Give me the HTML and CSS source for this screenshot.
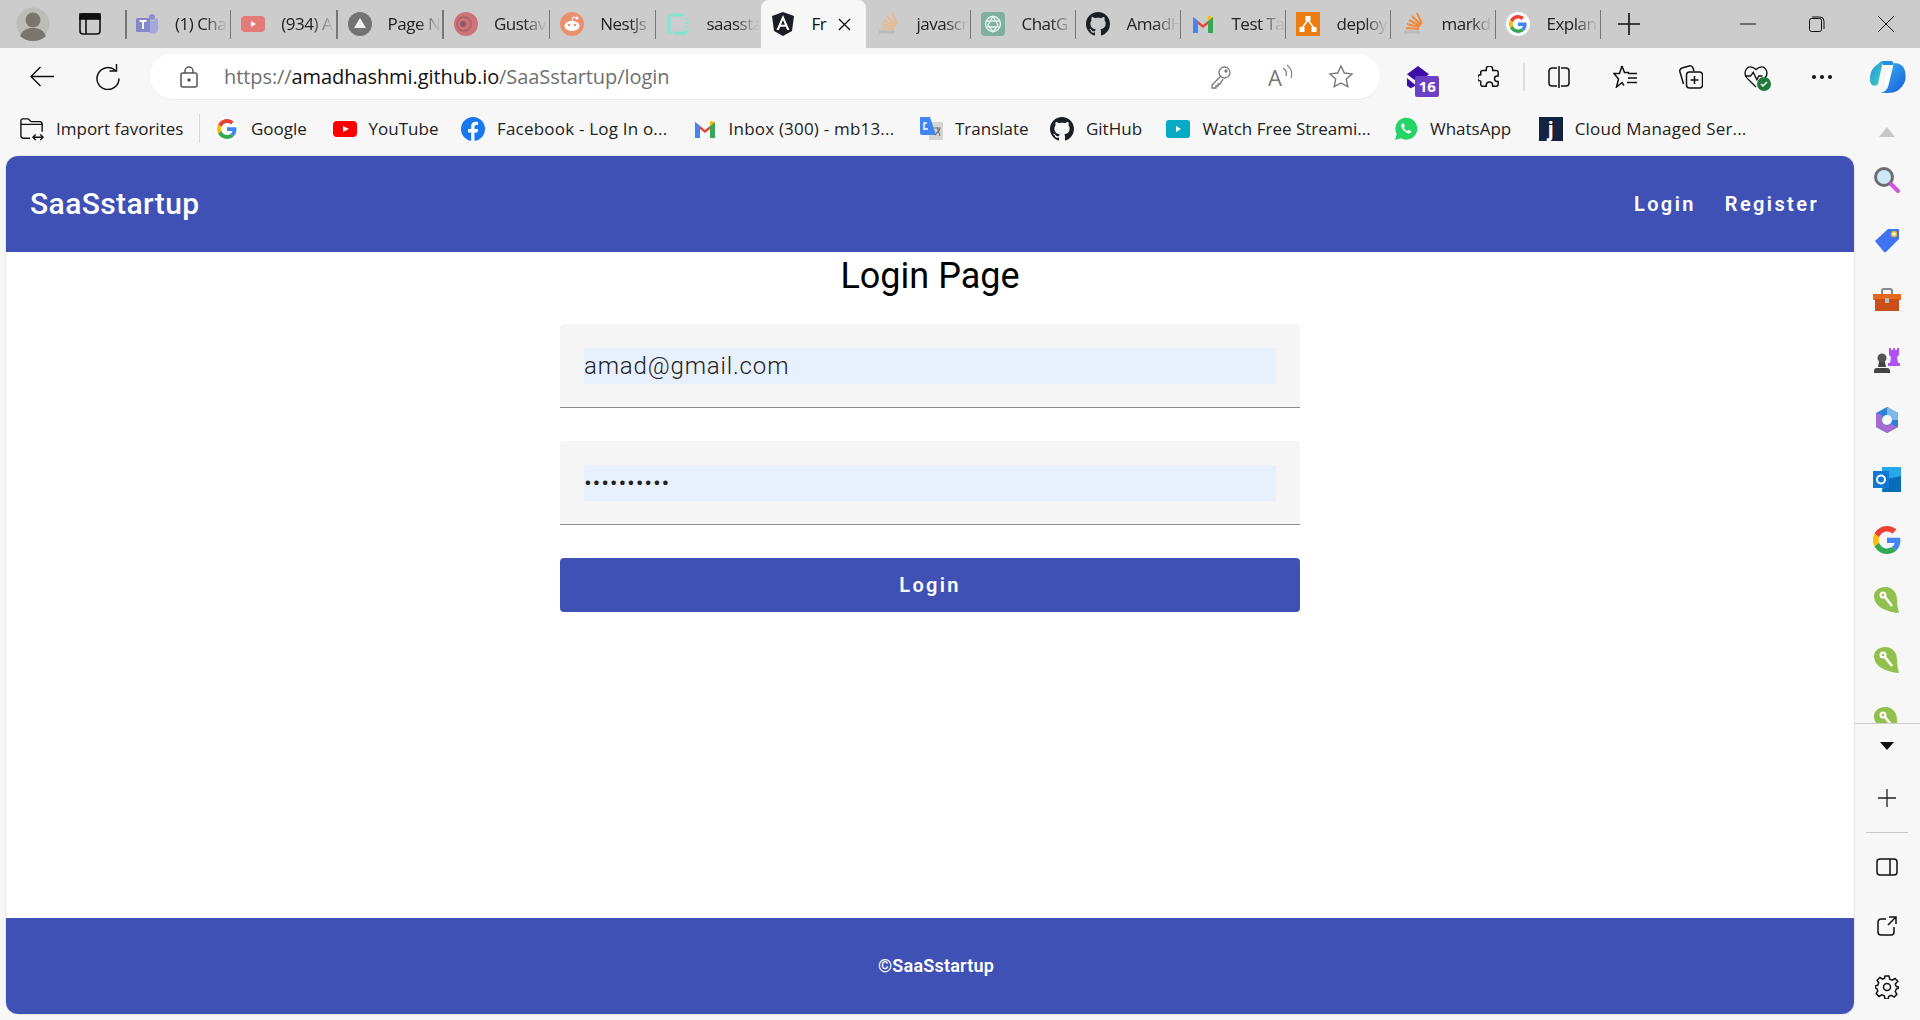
FILE: index.html
```html
<!DOCTYPE html>
<html lang="en">
<head>
<meta charset="utf-8">
<title>SaaSstartup Login</title>
<link rel="stylesheet" href="styles.css">
</head>
<body>
<div class="tabstrip">
  <div class="profile"><svg width="34" height="34" viewBox="0 0 34 34"><circle cx="17" cy="17" r="16.500" fill="#bdbdb8"/><circle cx="17" cy="13" r="7.500" fill="#79766f"/><path d="M4 29c3-7 8-8 13-8s10 1 13 8c-3 3-8 5-13 5s-10-2-13-5z" fill="#79766f"/></svg></div>
  <div class="tabs-btn"><svg width="22" height="22" viewBox="0 0 22 22" fill="none" stroke="#111" stroke-width="1.600"><rect x="1" y="1" width="20" height="20" rx="3"/><path d="M7 6v15"/><rect x="1" y="1" width="20" height="5" fill="#111"/></svg></div>
  <div class="tabs">
    <div class="tab"><svg class="ti" viewBox="0 0 24 24"><circle cx="17" cy="5" r="3" fill="#8c8ed0"/><circle cx="21" cy="8" r="2" fill="#a5a7dc"/><path d="M13 9h10v8a5 5 0 0 1-10 0z" fill="#a5a7dc"/><rect x="1" y="6" width="14" height="14" rx="1.500" fill="#8587c9"/><path d="M4.500 9h7M8 9v8" stroke="#fff" stroke-width="1.800"/></svg><span class="tt">(1) Cha</span></div>
    <div class="tab"><svg class="ti" viewBox="0 0 24 24"><rect y="4" width="24" height="16" rx="4" fill="#e57a7a"/><path d="M10 9l5 3-5 3z" fill="#fff"/></svg><span class="tt">(934) A</span></div>
    <div class="tab"><svg class="ti" viewBox="0 0 24 24"><circle cx="12" cy="12" r="12" fill="#737373"/><path d="M12 6l6 10H6z" fill="#f0f0f0"/></svg><span class="tt">Page N</span></div>
    <div class="tab"><svg class="ti" viewBox="0 0 24 24"><circle cx="12" cy="12" r="12" fill="#cf7377"/><circle cx="10" cy="12" r="7" fill="none" stroke="#a85f6e" stroke-width="1.500"/><circle cx="9" cy="12" r="3" fill="#8a5a6c"/></svg><span class="tt">Gustav</span></div>
    <div class="tab"><svg class="ti" viewBox="0 0 24 24"><circle cx="12" cy="12" r="12" fill="#e9906f"/><ellipse cx="12" cy="14" rx="7.500" ry="5" fill="#fff"/><circle cx="9" cy="13" r="1.300" fill="#e9906f"/><circle cx="15" cy="13" r="1.300" fill="#e9906f"/><circle cx="17" cy="6" r="1.500" fill="#fff"/><path d="M12 9l1-4 4 1" stroke="#fff" fill="none"/></svg><span class="tt">NestJs</span></div>
    <div class="tab noend"><svg class="ti" viewBox="0 0 24 24" fill="none"><path d="M5 3h13M21 21H8M3 3v18" stroke="#7fe8cf" stroke-width="3"/><path d="M21 6v15M3 21h5" stroke="#7fe8cf" stroke-width="3" stroke-dasharray="2 2"/></svg><span class="tt">saassta</span></div>
    <div class="tab active noend"><svg class="ti" viewBox="0 0 24 24"><path d="M12 0l11 4-2 15-9 5-9-5L1 4z" fill="#1c1c24"/><path d="M12 3L5.500 18h2.400l1.300-3.300h5.600l1.300 3.300h2.400zM10.100 12.700L12 8l1.900 4.700z" fill="#fff"/></svg><span class="tt">Fr</span><svg class="tx" viewBox="0 0 14 14" stroke="#111" stroke-width="1.400"><path d="M1 1l12 12M13 1L1 13"/></svg></div>
    <div class="tab"><svg class="ti" viewBox="0 0 24 24" fill="none" stroke="#e9b98f" stroke-width="2"><path d="M3 20h16" stroke="#bbb" stroke-width="3"/><path d="M5 16l13 1M6 12l12 3M8 8l11 6M11 4l9 9M16 1l5 11"/></svg><span class="tt">javascr</span></div>
    <div class="tab"><svg class="ti" viewBox="0 0 24 24"><rect width="24" height="24" rx="4" fill="#7faf9e"/><g fill="none" stroke="#e8f3ef" stroke-width="1.300"><circle cx="12" cy="12" r="7.500"/><path d="M12 4.500l5 8.500-5 7-5-7zM5 9h14M5 15h14"/></g></svg><span class="tt">ChatG</span></div>
    <div class="tab"><svg class="ti" viewBox="0 0 16 16"><use href="#gh-mark"/></svg><span class="tt">AmadH</span></div>
    <div class="tab"><svg class="ti" viewBox="0 0 24 24"><use href="#gm-mark"/></svg><span class="tt">Test Ta</span></div>
    <div class="tab"><svg class="ti" viewBox="0 0 24 24"><rect width="24" height="24" fill="#ee7d11"/><g fill="#fff"><rect x="9.500" y="4" width="5" height="5"/><rect x="3.500" y="15" width="5" height="5"/><rect x="15.500" y="15" width="5" height="5"/></g><path d="M12 8l-6 8M12 8l6 8" stroke="#fff" stroke-width="1.500"/></svg><span class="tt">deploy</span></div>
    <div class="tab"><svg class="ti" viewBox="0 0 24 24" fill="none" stroke="#f08a3c" stroke-width="2"><path d="M3 20h16" stroke="#bbb" stroke-width="3"/><path d="M5 16l13 1M6 12l12 3M8 8l11 6M11 4l9 9M16 1l5 11"/></svg><span class="tt">markd</span></div>
    <div class="tab"><svg class="ti" viewBox="-8 -8 64 64"><circle cx="24" cy="24" r="32" fill="#fff"/><use href="#g-mark"/></svg><span class="tt">Explan</span></div>
  </div>
  <div class="newtab"><svg width="22" height="22" viewBox="0 0 22 22" stroke="#111" stroke-width="1.600"><path d="M11 0v22M0 11h22"/></svg></div>
  <div class="winctl">
    <svg width="16" height="16" viewBox="0 0 16 16" stroke="#111"><path d="M0 8h16"/></svg>
    <svg width="16" height="16" viewBox="0 0 16 16" fill="none" stroke="#111"><rect x=".5" y="2.500" width="12" height="13" rx="2"/><path d="M3 1h8a4 4 0 0 1 4 4v8"/></svg>
    <svg width="16" height="16" viewBox="0 0 16 16" stroke="#111"><path d="M0 0l16 16M16 0L0 16"/></svg>
  </div>
</div>

<div class="toolbar">
  <svg class="nav-back" width="24" height="21" viewBox="0 0 24 21" fill="none" stroke="#111" stroke-width="1.500"><path d="M24 10.500H1M10.500 1L1 10.500 10.500 20"/></svg>
  <svg class="nav-reload" width="24" height="26" viewBox="0 0 24 26" fill="none" stroke="#111" stroke-width="1.500"><path d="M19.500 6.500A11 11 0 1 0 23 14.500"/><path d="M20.500 0v7h-7"/></svg>
  <div class="omnibox">
    <svg class="lock" width="18" height="22" viewBox="0 0 18 22" fill="none" stroke="#555" stroke-width="1.500"><rect x="1" y="7" width="16" height="14" rx="2"/><path d="M5 7V5a4 4 0 0 1 8 0v2"/><circle cx="9" cy="14" r="1" fill="#555"/></svg>
    <div class="url">https://<span class="host">amadhashmi.github.io</span>/SaaSstartup/login</div>
    <svg class="o-ico" width="22" height="24" viewBox="0 0 22 24" fill="none" stroke="#777" stroke-width="1.300"><circle cx="14.500" cy="7.500" r="5.500"/><circle cx="16" cy="6" r="1"/><path d="M10.500 11.500L2 20v3h4v-2h2v-2h2l3-5"/></svg>
    <div class="read">A<svg width="12" height="16" viewBox="0 0 12 16" fill="none" stroke="#777" stroke-width="1.200"><path d="M1 4c3 2 4 5 3 8M5 1c4 3 6 8 4 13"/></svg></div>
    <svg class="o-ico" width="26" height="26" viewBox="0 0 26 26" fill="none" stroke="#777" stroke-width="1.400"><path d="M13 2l3.300 7 7.700.9-5.700 5.200 1.500 7.600L13 19l-6.800 3.700 1.500-7.600L2 9.900 9.700 9z"/></svg>
  </div>
  <div class="tb-icons">
    <div class="slot"><div class="badge-wrap"><svg width="24" height="26" viewBox="0 0 26 28"><path d="M13 1l12 9-12 9L1 10z" fill="#3c0fa8"/><path d="M1 14l10 8-6 3-4-3z" fill="#3c0fa8"/></svg><span class="badge">16</span></div></div>
    <div class="slot"><svg width="22" height="22" viewBox="0 0 24 24" fill="none" stroke="#111" stroke-width="1.600"><path d="M9 3.500a3.500 3.500 0 0 1 7 0V5h4a2 2 0 0 1 2 2v4h-1a3 3 0 0 0 0 6h1v3a2 2 0 0 1-2 2h-4v-1a3.500 3.500 0 0 0-7 0v1H5a2 2 0 0 1-2-2v-3.500h0a3.500 3.500 0 0 1 0-7h0V7a2 2 0 0 1 2-2h4z"/></svg></div>
    <i class="vsep"></i>
    <div class="slot"><svg width="22" height="22" viewBox="0 0 22 22" fill="none" stroke="#111" stroke-width="1.500"><path d="M9 2H4a3 3 0 0 0-3 3v12a3 3 0 0 0 3 3h5M13 2h5a3 3 0 0 1 3 3v12a3 3 0 0 1-3 3h-5M11 0v22"/></svg></div>
    <div class="slot"><svg width="24" height="23" viewBox="0 0 24 23" fill="none" stroke="#111" stroke-width="1.500"><path d="M9 1l2.500 6.500H16M11 20.500L9 17.500 3.500 22 5.500 14 1 8.500h5.500L9 1"/><path d="M15 8.500h9M15 13h9M14 17.500h10"/></svg></div>
    <div class="slot"><svg width="24" height="24" viewBox="0 0 24 24" fill="none" stroke="#111" stroke-width="1.500"><rect x="7.500" y="7" width="16" height="16" rx="3"/><path d="M15.500 11v8M11.500 15h8M4.500 19L1 7a3 3 0 0 1 2-4l7-2a3 3 0 0 1 4 2l1 3"/></svg></div>
    <div class="slot"><div class="health"><svg width="24" height="23" viewBox="0 0 26 25" fill="none" stroke="#111" stroke-width="1.500"><path d="M13 24L3 14C-1 9 2 2 7 2c3 0 5 2 6 3 1-1 3-3 6-3 5 0 8 7 4 12"/><path d="M1 12h6l3-4 4 8 2-4h4"/></svg><i class="ok"><svg width="10" height="10" viewBox="0 0 10 10" fill="none" stroke="#fff" stroke-width="1.500"><path d="M2 5l2 2 4-4"/></svg></i></div></div>
    <div class="slot"><div class="dots"><i></i><i></i><i></i></div></div>
    <div class="slot"><svg width="36" height="32" viewBox="0 0 36 32"><defs><linearGradient id="cp1" x1="0" y1="0" x2="1" y2="1"><stop offset="0" stop-color="#1f8fe8"/><stop offset="1" stop-color="#47d6b2"/></linearGradient><linearGradient id="cp2" x1="0" y1="0" x2="1" y2="1"><stop offset="0" stop-color="#3ac4f2"/><stop offset="1" stop-color="#1a56db"/></linearGradient></defs><path d="M12 0h9c2 0 3 2 2 4L13 4C12 2 12 1 12 0z" fill="#1f8fe8"/><path d="M8 3c2-2 3-3 5-3l-5 23c-1 2-4 2-6 1-2-2-2-4-2-6 0-7 3-12 8-15z" fill="url(#cp1)"/><path d="M24 2c6 0 10 3 11 8 1 6 1 10-2 14-3 5-8 8-15 8H8c5 0 8-2 10-6L23 6c0-2 0-3 1-4z" fill="url(#cp2)"/><path d="M19.500 8L16 24" stroke="#fff" stroke-width="3.500"/></svg></div>
  </div>
</div>

<div class="bookmarks">
  <div class="bm import"><svg width="24" height="24" viewBox="0 0 26 26" fill="none" stroke="#111" stroke-width="1.500"><path d="M11 23H4a3 3 0 0 1-3-3V4a2 2 0 0 1 2-2h6l3 3h9a3 3 0 0 1 3 3v8"/><path d="M1 8h24M14 22h11M17 19l-3 3 3 3M22 19l3 3-3 3"/></svg><span>Import favorites</span></div>
  <div class="bm"><svg class="bi" viewBox="-5 -5 58 58"><circle cx="24" cy="24" r="29" fill="#fff"/><g id="g-mark"><path fill="#ea4335" d="M24 9.500c3.500 0 6.700 1.200 9.200 3.600l6.900-6.900C35.900 2.400 30.500 0 24 0 14.600 0 6.500 5.400 2.600 13.200l8 6.200C12.500 13.700 17.800 9.500 24 9.500z"/><path fill="#4285f4" d="M47 24.500c0-1.600-.1-3.100-.4-4.500H24v9h13c-.6 3-2.300 5.500-4.800 7.200l7.700 6C44.400 37.900 47 31.800 47 24.500z"/><path fill="#fbbc05" d="M10.500 28.600A14.500 14.500 0 0 1 10.500 19.400l-8-6.200A24 24 0 0 0 2.600 34.800z"/><path fill="#34a853" d="M24 48c6.500 0 11.900-2.100 15.900-5.800l-7.700-6c-2.100 1.400-4.900 2.300-8.200 2.300-6.200 0-11.500-4.200-13.400-9.900l-8 6.200C6.500 42.600 14.600 48 24 48z"/></g></svg><span>Google</span></div>
  <div class="bm"><svg class="bi" viewBox="0 0 24 24"><rect y="4" width="24" height="16" rx="4" fill="#f00"/><path d="M10 9l6 3-6 3z" fill="#fff"/></svg><span>YouTube</span></div>
  <div class="bm"><svg class="bi" viewBox="0 0 24 24"><circle cx="12" cy="12" r="12" fill="#1877f2"/><path d="M16.500 15.500l.5-3.500h-3.500V9.800c0-1 .5-1.900 2-1.900H17V5c-3.600-.7-6.800.2-6.800 4.400V12H7v3.500h3.200V24h3.300v-8.500z" fill="#fff"/></svg><span class="wide">Facebook - Log In o...</span></div>
  <div class="bm"><svg class="bi" viewBox="0 0 24 24"><g id="gm-mark"><path d="M2 21V5l10 8 10-8v16h-5v-9l-5 4-5-4v9z" fill="#ea4335"/><path d="M2 21V5l5 4v12z" fill="#4285f4"/><path d="M22 21V5l-5 4v12z" fill="#34a853"/><path d="M22 5l-5 4V4z" fill="#fbbc04"/></g></svg><span class="wide">Inbox (300) - mb13...</span></div>
  <div class="bm"><svg class="bi" viewBox="0 0 24 24"><rect x="10" y="5" width="14" height="18" fill="#d5d5d5"/><path d="M1 0h10l6 18H3a2 2 0 0 1-2-2z" fill="#4285f4"/><path d="M8 6H5v6h4" fill="none" stroke="#fff" stroke-width="1.500"/><path d="M15 11h7M18 10l3 9M21 12l-5 6" stroke="#777" stroke-width="1.200"/></svg><span>Translate</span></div>
  <div class="bm"><svg class="bi" viewBox="0 0 16 16"><path id="gh-mark" fill="#1b1f24" d="M8 0C3.580 0 0 3.580 0 8c0 3.540 2.290 6.530 5.470 7.590.4.070.55-.17.55-.38 0-.19-.01-.82-.01-1.490-2.010.37-2.530-.49-2.690-.94-.09-.23-.48-.94-.82-1.130-.28-.15-.68-.52-.01-.53.630-.01 1.080.58 1.230.82.720 1.210 1.870.87 2.330.66.070-.52.280-.87.510-1.070-1.780-.2-3.640-.89-3.640-3.950 0-.87.310-1.590.820-2.150-.08-.2-.36-1.020.08-2.120 0 0 .67-.21 2.200.82.640-.18 1.320-.27 2-.27s1.360.09 2 .27c1.530-1.040 2.200-.82 2.200-.82.440 1.100.160 1.920.08 2.120.510.560.820 1.270.820 2.150 0 3.070-1.870 3.750-3.650 3.950.29.250.54.730.54 1.480 0 1.070-.01 1.930-.01 2.200 0 .21.150.46.550.38A8.010 8.010 0 0 0 16 8c0-4.420-3.580-8-8-8z"/></svg><span>GitHub</span></div>
  <div class="bm"><svg class="bi" viewBox="0 0 24 24"><rect y="3" width="24" height="18" rx="3" fill="#05abc4"/><path d="M10 9l5 3-5 3z" fill="#fff"/></svg><span>Watch Free Streami...</span></div>
  <div class="bm"><svg class="bi" viewBox="0 0 24 24"><path d="M1 23l1.700-6A11 11 0 1 1 7 21.300z" fill="#25d366"/><path d="M8 6.500c-1.500 1.500-1 4 1.500 6.800 3 3 5.500 4 7 2.500l1-1.500-3-1.500-1.200 1.200c-1.500-.5-3-2-3.600-3.600L11 9.200 9.500 6.300z" fill="#fff"/></svg><span>WhatsApp</span></div>
  <div class="bm"><span class="jtile">j</span><span class="wide">Cloud Managed Ser...</span></div>
  <svg class="bm-up" width="16" height="10" viewBox="0 0 16 10"><path d="M8 0l8 10H0z" fill="#c8c8c8"/></svg>
</div>

<div class="lower">
  <div class="app">
    <header class="app-header">
      <div class="brand">SaaSstartup</div>
      <nav class="app-nav"><a>Login</a><a>Register</a></nav>
    </header>
    <main class="login">
      <h1>Login Page</h1>
      <form class="login-form">
        <div class="field"><input class="field-input" type="email" value="amad@gmail.com"></div>
        <div class="field"><input class="field-input" type="password" value="1234567890"></div>
        <button class="submit" type="button">Login</button>
      </form>
    </main>
    <footer class="app-footer">©SaaSstartup</footer>
  </div>
  <aside class="sidebar">
    <div class="side-scroll">
      <svg class="si" viewBox="0 0 28 28"><circle cx="11" cy="11" r="8.500" fill="#cfe8f7" stroke="#6d6d6d" stroke-width="3"/><path d="M18 18l7 7" stroke="#d050e0" stroke-width="4" stroke-linecap="round"/></svg>
      <svg class="si" viewBox="0 0 28 28"><path d="M2 15L15 3h10a1 1 0 0 1 1 1v9L13 26a2 2 0 0 1-2 0z" fill="#3f73f0"/><circle cx="21" cy="8" r="2.500" fill="#fff" stroke="#e6b422" stroke-width="1.500"/></svg>
      <svg class="si" viewBox="0 0 28 28"><path d="M9 8V5a2 2 0 0 1 2-2h6a2 2 0 0 1 2 2v3" fill="none" stroke="#888" stroke-width="2"/><rect y="8" width="28" height="6" fill="#e8671f"/><rect x="2" y="13" width="24" height="12" fill="#c94f1a"/><rect x="12" y="12" width="4" height="5" fill="#bbb"/></svg>
      <svg class="si" viewBox="0 0 28 28"><path d="M16 2h2v2h2V2h2v2h2V2h2v7l-2 2 1 6h2v3H15v-3h2l1-6-2-2z" fill="#b050f0"/><circle cx="9" cy="12" r="4.500" fill="#555"/><path d="M6 16h6l1 5H5zM1 25a3 3 0 0 1 3-3h10a3 3 0 0 1 3 3v2H1z" fill="#444"/></svg>
      <svg class="si" viewBox="0 0 28 28"><path d="M14 1l11 6v14l-11 6-11-6V7z" fill="#2e7fd6"/><path d="M14 1l11 6v7h-7a5 5 0 0 0-4-4z" fill="#7db9e8"/><path d="M3 7v14l11 6 11-6-7-3-4 2-5-4V9z" fill="#a56bcf"/><circle cx="14" cy="14" r="5" fill="#f7f7f7"/></svg>
      <svg class="si" viewBox="0 0 28 28"><rect x="9" y="1" width="19" height="25" fill="#28a8ea"/><path d="M14 13l14-3v16H9z" fill="#0a6cb8"/><rect y="5" width="16" height="17" fill="#0f78d4"/><circle cx="8" cy="13.500" r="4" fill="none" stroke="#fff" stroke-width="2"/></svg>
      <svg class="si" viewBox="0 0 48 48"><use href="#g-mark"/></svg>
      <svg class="si" viewBox="0 0 28 28"><use href="#keypin"/></svg>
      <svg class="si" viewBox="0 0 28 28"><use href="#keypin"/></svg>
      <svg class="si" viewBox="0 0 28 28"><g id="keypin"><path d="M12 1c8 0 12 6 12 13 0 5 1 9 2 13C14 26 1 21 1 10 1 5 6 1 12 1z" fill="#92c04c"/><circle cx="10" cy="9" r="3.500" fill="#fff"/><circle cx="10" cy="9" r="1.300" fill="#92c04c"/><path d="M12 11l7 9" stroke="#fff" stroke-width="2.600"/></g></svg>
    </div>
    <div class="side-bottom">
      <svg class="sb" width="14" height="8" viewBox="0 0 14 8"><path d="M0 0h14L7 8z" fill="#111"/></svg>
      <svg class="sb" width="18" height="18" viewBox="0 0 18 18" stroke="#222" stroke-width="1.300"><path d="M9 0v18M0 9h18"/></svg>
      <i class="side-rule"></i>
      <svg class="sb" width="22" height="18" viewBox="0 0 22 18" fill="none" stroke="#111" stroke-width="1.500"><rect x="1" y="1" width="20" height="16" rx="3"/><path d="M14 1v16"/></svg>
      <svg class="sb" width="20" height="20" viewBox="0 0 20 20" fill="none" stroke="#111" stroke-width="1.500"><path d="M9 3H4a3 3 0 0 0-3 3v10a3 3 0 0 0 3 3h10a3 3 0 0 0 3-3v-5M11 9l8-8M12 1h7v7"/></svg>
      <svg class="sb" width="24" height="24" viewBox="0 0 24 24" fill="none" stroke="#111" stroke-width="1.500"><circle cx="12" cy="12" r="3.500"/><path d="M10 1h4l.7 3.200 2.500 1 2.800-1.700 2.800 2.800L20.300 9l1 2.500L24 12v1l-2.700 1-1 2.500 1.600 2.800-2.800 2.800-2.800-1.700-2.500 1L13 24h-3l-.7-3.200-2.500-1-2.800 1.700-2.800-2.800L2.800 16l-1-2.500L0 13v-2l2.700-.7 1-2.500L2.100 5.300l2.800-2.800 2.800 1.700 1.800-1z"/></svg>
    </div>
  </aside>
</div>
</body>
</html>
```
FILE: styles.css
```css
* { box-sizing: border-box; }
html, body { margin: 0; padding: 0; height: 100%; }
body {
  width: 1920px; height: 1020px; overflow: hidden;
  background: #f7f7f7; color: #111;
  font-family: "Open Sans", "Noto Sans", sans-serif;
  display: flex; flex-direction: column;
}
svg { display: block; flex: none; }

/* tab strip */
.tabstrip { height: 48px; background: #ccc; display: flex; align-items: center; flex: none; }
.profile { width: 34px; margin-left: 16px; }
.tabs-btn { margin-left: 29px; margin-right: 24px; width: 22px; }
.tabs { display: grid; grid-template-columns: repeat(5, 106.300px) repeat(9, 105px); }
.tab {
  height: 48px; display: flex; align-items: center; padding: 0 2px 0 10px;
  position: relative; font-size: 17px; letter-spacing: -.5px; color: #222;
}
.tab:first-child::before { content: ""; position: absolute; left: 0; top: 10px; height: 29px; width: 1.500px; background: #777; }
.tab::after { content: ""; position: absolute; right: 0; top: 10px; height: 29px; width: 1.500px; background: #777; }
.tab.noend::after { display: none; }
.tab.active { background: #f7f7f7; border-radius: 8px 8px 0 0; }
.ti { width: 24px; height: 24px; margin-right: 16px; }
.tt { white-space: nowrap; flex: 1; min-width: 0; margin-top: -2px; -webkit-mask-image: linear-gradient(90deg, #000 55%, rgba(0,0,0,.1) 92%); mask-image: linear-gradient(90deg, #000 55%, rgba(0,0,0,.1) 92%); }
.active .tt { color: #111; -webkit-mask-image: none; mask-image: none; }
.tx { width: 13px; height: 13px; margin-right: 13px; }
.newtab { margin-left: 17px; }
.winctl { margin-left: auto; display: flex; gap: 53px; margin-right: 26px; }

/* toolbar */
.toolbar { height: 60px; display: flex; align-items: center; flex: none; padding-bottom: 3px; }
.nav-back { margin-left: 30px; }
.nav-reload { margin-left: 42px; }
.omnibox {
  margin-left: 30px; width: 1230px; height: 45px; background: #fff; border-radius: 23px; flex: none;
  display: flex; align-items: center; padding: 0 26px 0 30px; box-shadow: 0 1px 1px rgba(0,0,0,.05);
}
.lock { margin-right: 26px; }
.url { font-size: 20px; letter-spacing: -.08px; color: #6f6f6f; flex: 1; white-space: nowrap; }
.host { color: #111; }
.read { display: flex; align-items: flex-start; margin: 0 34px 0 36px; color: #777; font-size: 22px; line-height: 26px; }
.tb-icons { display: flex; align-items: center; flex: 1; margin-left: 10px; }
.slot { width: 65.700px; display: flex; justify-content: center; align-items: center; flex: none; }
.badge-wrap { position: relative; width: 33px; height: 32px; margin-top: 9px; }
.badge {
  position: absolute; right: 0; bottom: 0; width: 24px; height: 21px; background: #6d3fc4; color: #fff;
  border-radius: 2px; font: 700 15px/21px "Noto Sans", sans-serif; text-align: center;
}
.vsep { width: 2px; height: 28px; background: #ddd; margin: 0 1.500px; flex: none; }
.health { position: relative; width: 24px; height: 24px; }
.ok { position: absolute; right: -3px; bottom: -2px; width: 14px; height: 14px; border-radius: 50%; background: #1f7a3c; display: flex; align-items: center; justify-content: center; }
.dots { display: flex; gap: 4px; }
.dots i { width: 4px; height: 4px; background: #111; border-radius: 50%; }

/* bookmarks */
.bookmarks {
  height: 48px; flex: none; padding: 0 0 7px 20px; font-size: 17px; color: #222; position: relative;
  display: grid; align-items: center;
  grid-template-columns: 195px 117.600px 128.400px 231.600px 226.400px 131px 116.500px 227.500px 144.700px 1fr;
}
.bm { display: flex; align-items: center; gap: 12px; white-space: nowrap; }
.bm.import { width: 180px; height: 29px; border-right: 1px solid #d8d8d8; }
.wide { letter-spacing: .2px; }
.bi { width: 24px; height: 24px; }
.jtile { width: 24px; height: 24px; background: #14233f; color: #fff; font: 700 20px/24px "Noto Sans", sans-serif; text-align: center; }
.bm-up { position: absolute; right: 25px; top: 19px; }

/* app */
.lower { flex: 1; display: flex; min-height: 0; }
.app { width: 1848px; margin: 0 0 6px 6px; background: #fff; border-radius: 12px; overflow: hidden; display: flex; flex-direction: column; box-shadow: 0 0 2px rgba(0,0,0,.2); font-family: Roboto, sans-serif; }
.app-header { height: 96px; flex: none; background: #3f51b5; color: #fff; display: flex; align-items: center; justify-content: space-between; padding: 0 35px 0 24px; }
.brand { font-size: 30px; font-weight: 500; letter-spacing: .4px; margin-bottom: 2px; }
.app-nav { display: flex; gap: 29px; font-size: 20px; font-weight: 600; letter-spacing: 2.400px; }
.login { flex: 1; display: flex; flex-direction: column; align-items: center; }
.login h1 { margin: 0; padding-top: 2px; font-size: 36px; line-height: 44px; font-weight: 400; color: #000; }
.login-form { width: 740px; margin-top: 26px; display: flex; flex-direction: column; }
.field { height: 84px; background: #f5f5f5; border-radius: 4px 4px 0 0; border-bottom: 1px solid #8c8c8c; padding: 24px 24px 0; margin-bottom: 33px; }
.field-input { display: block; width: 100%; height: 36px; border: 0; padding: 0; margin: 0; outline: 0; background: #e8f0fe; color: #212121; font-family: Roboto, sans-serif; font-size: 24px; font-weight: 350; letter-spacing: .850px; }
.submit { height: 54px; border: 0; border-radius: 4px; background: #3f51b5; color: #fff; font-family: Roboto, sans-serif; font-size: 20px; font-weight: 600; letter-spacing: 2.300px; padding: 0; }
.app-footer { height: 96px; flex: none; background: #3f51b5; color: #fff; display: flex; align-items: center; justify-content: center; font-size: 18px; font-weight: 600; letter-spacing: .2px; padding: 0 0 1px 12px; }

/* sidebar */
.sidebar { flex: 1; display: flex; flex-direction: column; align-items: center; min-width: 0; }
.side-scroll { height: 568px; width: 100%; border-bottom: 1px solid #ccc; overflow: hidden; display: flex; flex-direction: column; align-items: center; padding-top: 10px; gap: 32px; flex: none; }
.si { width: 28px; height: 28px; flex: none; }
.side-bottom { display: flex; flex-direction: column; align-items: center; width: 100%; }
.side-bottom .sb:nth-child(1) { margin-top: 18px; }
.side-bottom .sb:nth-child(2) { margin-top: 39px; }
.side-rule { width: 42px; height: 1px; background: #c8c8c8; margin-top: 25px; }
.side-bottom .sb:nth-child(4) { margin-top: 25px; }
.side-bottom .sb:nth-child(5) { margin-top: 40px; }
.side-bottom .sb:nth-child(6) { margin-top: 39px; }
```
